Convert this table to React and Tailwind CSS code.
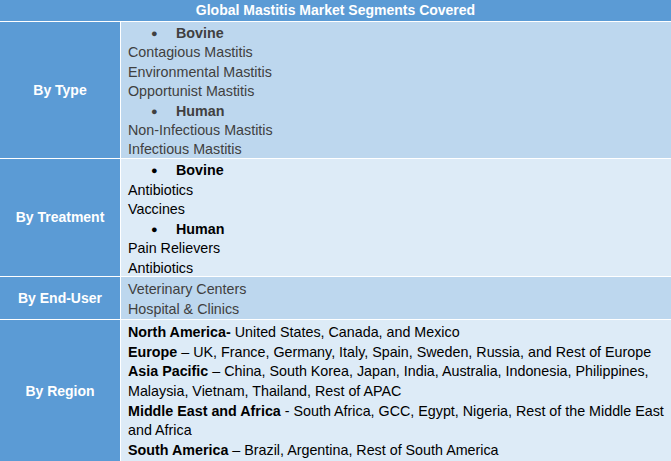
import React from "react";

const rows = [
  {
    label: "By Type",
    bg: "bg-[#bdd7ee]",
    text: "text-[#404040]",
    h: "h-[136px]",
    lh: "h-[19.4px] leading-[19.4px]",
    lines: [
      { bullet: "Bovine" },
      "Contagious Mastitis",
      "Environmental Mastitis",
      "Opportunist Mastitis",
      { bullet: "Human" },
      "Non-Infectious Mastitis",
      "Infectious Mastitis",
    ],
  },
  {
    label: "By Treatment",
    bg: "bg-[#ddebf7]",
    text: "text-black",
    h: "h-[117px]",
    lh: "h-[19.5px] leading-[19.5px]",
    lines: [
      { bullet: "Bovine" },
      "Antibiotics",
      "Vaccines",
      { bullet: "Human" },
      "Pain Relievers",
      "Antibiotics",
    ],
  },
  {
    label: "By End-User",
    bg: "bg-[#bdd7ee]",
    text: "text-[#404040]",
    h: "h-[42px]",
    lh: "h-[20px] leading-[20px]",
    lines: ["Veterinary Centers", "Hospital & Clinics"],
  },
];

const regions = [
  ["North America-", " United States, Canada, and Mexico"],
  ["Europe", " – UK, France, Germany, Italy, Spain, Sweden, Russia, and Rest of Europe"],
  ["Asia Pacific", " – China, South Korea, Japan, India, Australia, Indonesia, Philippines,"],
  [null, "Malaysia, Vietnam, Thailand, Rest of APAC"],
  ["Middle East and Africa", " - South Africa, GCC, Egypt, Nigeria, Rest of the Middle East"],
  [null, "and Africa"],
  ["South America", " – Brazil, Argentina, Rest of South America"],
];

const Line = ({ item, lh }) => {
  if (typeof item === "string") {
    return <div className={`${lh} whitespace-nowrap`}>{item}</div>;
  }
  return (
    <div className={`${lh} flex items-center whitespace-nowrap`}>
      <span className="ml-[23px] w-[25px] text-[11px]">●</span>
      <span className="font-bold">{item.bullet}</span>
    </div>
  );
};

export default function App() {
  return (
    <div
      className="w-[671px] bg-white text-[14.3px]"
      style={{ fontFamily: '"Liberation Sans", Arial, sans-serif' }}
    >
      <div className="grid grid-cols-[120px_1fr] gap-px bg-white">
        <div className="col-span-2 h-[21px] bg-[#5b9bd5] text-white text-[14px] font-bold flex items-center justify-center">
          Global Mastitis Market Segments Covered
        </div>
        {rows.map((row) => (
          <React.Fragment key={row.label}>
            <div className="bg-[#5b9bd5] text-white text-[14px] font-bold flex items-center justify-center">
              {row.label}
            </div>
            <div className={`${row.bg} ${row.text} ${row.h} overflow-hidden pl-[7px] pt-[2px]`}>
              {row.lines.map((l, i) => (
                <Line key={i} item={l} lh={row.lh} />
              ))}
            </div>
          </React.Fragment>
        ))}
        <div className="bg-[#5b9bd5] text-white text-[14px] font-bold flex items-center justify-center">
          By Region
        </div>
        <div className="bg-[#ddebf7] text-black pl-[7px] pt-[3px] pb-[3px]">
          {regions.map(([b, t], i) => (
            <div key={i} className="h-[19.7px] leading-[19.7px] whitespace-nowrap">
              {b && <span className="font-bold">{b}</span>}
              {t}
            </div>
          ))}
        </div>
      </div>
    </div>
  );
}
